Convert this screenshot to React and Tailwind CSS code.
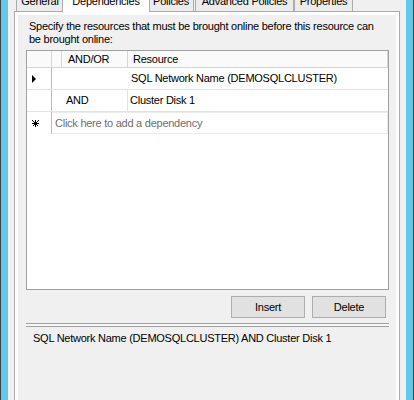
const font = { fontFamily: '"Liberation Sans", Arial, sans-serif' };

function Tab({ label, width, selected }) {
  if (selected) {
    return (
      <div
        className={`relative z-10 -mx-[2px] -mt-[8px] h-[20px] ${width} border border-b-0 border-[#acacac] bg-white text-center leading-[13px]`}
      >
        <span className="block pt-[2px]">{label}</span>
      </div>
    );
  }
  return (
    <div
      className={`-mt-[6px] h-[17px] ${width} border border-b-0 border-[#acacac] bg-[#ececec] text-center leading-[13px]`}
    >
      {label}
    </div>
  );
}

function HeaderCell({ className, children }) {
  return (
    <div className={`flex h-full items-center border-r border-[#d5d5d5] bg-[#fafafa] ${className}`}>
      {children}
    </div>
  );
}

function Row({ marker, andOr, resource, vline }) {
  return (
    <div className="flex h-[22px] border-b border-[#e3e3e3]">
      <div className="flex w-[25px] items-center border-r border-[#bdbdbd] bg-white pl-[5px]">{marker}</div>
      <div className={`flex w-[76px] items-center pl-[14px] ${vline ? "border-r border-[#e3e3e3]" : ""}`}>{andOr}</div>
      <div className={`flex flex-1 items-center ${vline ? "pl-[2px]" : "pl-[3px]"}`}>{resource}</div>
    </div>
  );
}

export default function App() {
  return (
    <div
      className="flex h-[400px] w-[414px] overflow-hidden border-x border-[#404040] bg-[#63c8eb] px-[7px] text-[11px] tracking-[-0.25px] text-black"
      style={font}
    >
      <div className="flex flex-1 flex-col bg-[#f0f0f0] px-[6px]">
        {/* tab strip */}
        <div className="flex h-[11px] pl-[2px]">
          <Tab label="General" width="w-[48px]" />
          <Tab label="Dependencies" width="w-[88px]" selected />
          <Tab label="Policies" width="w-[46px]" />
          <div className="w-[1px]" />
          <Tab label="Advanced Policies" width="w-[99px]" />
          <Tab label="Properties" width="w-[59px]" />
        </div>

        {/* tab page */}
        <div className="flex flex-1 flex-col border border-b-0 border-[#acacac] bg-white px-[3px] pt-[3px]">
          <div className="flex flex-1 flex-col bg-[#f0f0f0] pt-[5px]">
            <p className="pl-[11px] leading-[13px]">
              Specify the resources that must be brought online before this resource can
              <br />
              be brought online:
            </p>

            <div className="ml-[8px] mt-[4px] flex h-[240px] w-[363px] flex-col border border-[#a0a0a0] bg-white">
              <div className="flex h-[17px] border-b border-[#d5d5d5]">
                <HeaderCell className="w-[25px]" />
                <HeaderCell className="w-[10px]" />
                <HeaderCell className="w-[66px] pl-[6px]">AND/OR</HeaderCell>
                <HeaderCell className="flex-1 pl-[5px]">Resource</HeaderCell>
              </div>
              <Row
                marker={
                  <svg width="5" height="8" viewBox="0 0 5 8">
                    <path d="M0 0 L4 4 L0 8 Z" fill="#000" />
                  </svg>
                }
                resource="SQL Network Name (DEMOSQLCLUSTER)"
              />
              <Row andOr="AND" resource="Cluster Disk 1" vline />
              <div className="flex h-[22px]">
                <div className="flex w-[25px] items-center border-r border-[#bdbdbd] pl-[5px]">
                  <svg width="7" height="7" viewBox="0 0 7 7" shapeRendering="crispEdges">
                    <path d="M3.5 0 V7 M0 3.5 H7 M0.5 0.5 L6.5 6.5 M6.5 0.5 L0.5 6.5" stroke="#000" strokeWidth="1" />
                  </svg>
                </div>
                <div className="flex flex-1 items-center border border-l-0 border-[#ebebeb] pl-[3px] text-[#6d6d6d]">
                  Click here to add a dependency
                </div>
              </div>
            </div>

            <div className="ml-[8px] mt-[6px] flex w-[360px] justify-end gap-[7px]">
              <button className="h-[22px] w-[74px] border border-[#adadad] bg-[#e1e1e1]">Insert</button>
              <button className="h-[22px] w-[74px] border border-[#adadad] bg-[#e1e1e1]">Delete</button>
            </div>

            <div className="ml-[8px] mt-[5px] h-[4px] w-[363px] border-y border-[#a0a0a0] bg-[#f7f7f7]" />

            <p className="ml-[15px] mt-[5px] leading-[13px]">
              SQL Network Name (DEMOSQLCLUSTER) AND Cluster Disk 1
            </p>
          </div>
        </div>
      </div>
    </div>
  );
}
